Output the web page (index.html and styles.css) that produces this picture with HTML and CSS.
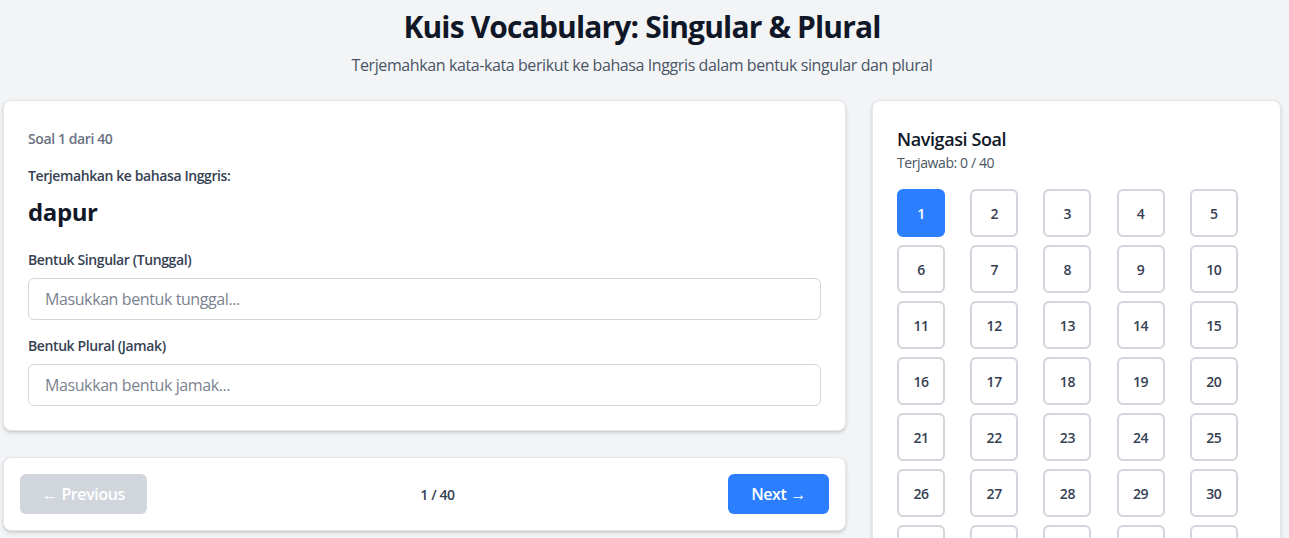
FILE: index.html
```html
<!DOCTYPE html>
<html lang="id">
<head>
<meta charset="utf-8">
<title>Kuis Vocabulary: Singular &amp; Plural</title>
<link rel="stylesheet" href="styles.css">
</head>
<body>
<div class="page">
  <header class="header">
    <h1 class="title">Kuis Vocabulary: Singular &amp; Plural</h1>
    <p class="subtitle">Terjemahkan kata-kata berikut ke bahasa Inggris dalam bentuk singular dan plural</p>
  </header>
  <main class="layout">
    <section class="main-col">
      <div class="card question-card">
        <div class="counter">Soal 1 dari 40</div>
        <div class="prompt">Terjemahkan ke bahasa Inggris:</div>
        <div class="word">dapur</div>
        <label class="field-label" for="singular">Bentuk Singular (Tunggal)</label>
        <input class="field" id="singular" type="text" placeholder="Masukkan bentuk tunggal...">
        <label class="field-label second" for="plural">Bentuk Plural (Jamak)</label>
        <input class="field" id="plural" type="text" placeholder="Masukkan bentuk jamak...">
      </div>
      <div class="card pager">
        <button class="btn btn-disabled" type="button">← Previous</button>
        <span class="pager-count">1 / 40</span>
        <button class="btn btn-primary" type="button">Next →</button>
      </div>
    </section>
    <aside class="card nav-card">
      <h2 class="nav-title">Navigasi Soal</h2>
      <div class="nav-sub">Terjawab: 0 / 40</div>
      <div class="nav-grid">
        <button class="num active" type="button">1</button>
        <button class="num" type="button">2</button>
        <button class="num" type="button">3</button>
        <button class="num" type="button">4</button>
        <button class="num" type="button">5</button>
        <button class="num" type="button">6</button>
        <button class="num" type="button">7</button>
        <button class="num" type="button">8</button>
        <button class="num" type="button">9</button>
        <button class="num" type="button">10</button>
        <button class="num" type="button">11</button>
        <button class="num" type="button">12</button>
        <button class="num" type="button">13</button>
        <button class="num" type="button">14</button>
        <button class="num" type="button">15</button>
        <button class="num" type="button">16</button>
        <button class="num" type="button">17</button>
        <button class="num" type="button">18</button>
        <button class="num" type="button">19</button>
        <button class="num" type="button">20</button>
        <button class="num" type="button">21</button>
        <button class="num" type="button">22</button>
        <button class="num" type="button">23</button>
        <button class="num" type="button">24</button>
        <button class="num" type="button">25</button>
        <button class="num" type="button">26</button>
        <button class="num" type="button">27</button>
        <button class="num" type="button">28</button>
        <button class="num" type="button">29</button>
        <button class="num" type="button">30</button>
        <button class="num" type="button">31</button>
        <button class="num" type="button">32</button>
        <button class="num" type="button">33</button>
        <button class="num" type="button">34</button>
        <button class="num" type="button">35</button>
        <button class="num" type="button">36</button>
        <button class="num" type="button">37</button>
        <button class="num" type="button">38</button>
        <button class="num" type="button">39</button>
        <button class="num" type="button">40</button>
      </div>
    </aside>
  </main>
</div>
</body>
</html>
```

FILE: styles.css
```css
* { box-sizing: border-box; }
html, body {
  margin: 0;
  padding: 0;
  background: #f3f4f6;
  font-family: "Open Sans", "Noto Sans", "Liberation Sans", sans-serif;
  letter-spacing: -0.025em;
  color: #101828;
}
.page {
  width: 1278px;
  margin-left: 3px;
  padding-top: 9px;
}
.header { text-align: center; margin-bottom: 23px; }
.title {
  margin: 0;
  font-size: 30px;
  line-height: 36px;
  font-weight: 700;
  letter-spacing: -0.028em;
  color: #101828;
}
.subtitle {
  margin: 8px 0 0;
  font-size: 16px;
  line-height: 24px;
  color: #4a5565;
}
.layout {
  display: grid;
  grid-template-columns: 1fr 409px;
  gap: 26px;
  align-items: start;
}
.main-col { display: flex; flex-direction: column; gap: 26px; }
.card {
  background: #fff;
  border: 1px solid #e5e7eb;
  border-radius: 8px;
  box-shadow: 0 2px 4px rgba(0,0,0,0.12), 0 1px 2px rgba(0,0,0,0.08);
}
.question-card {
  padding: 28px 24px 24px;
  display: flex;
  flex-direction: column;
}
.counter { font-size: 14px; line-height: 20px; font-weight: 600; color: #6a7282; margin-bottom: 17px; }
.prompt { font-size: 14px; line-height: 20px; font-weight: 600; color: #364153; margin-bottom: 10px; }
.word { font-size: 24px; line-height: 32px; font-weight: 700; color: #101828; margin-bottom: 22px; }
.field-label { font-size: 14px; line-height: 20px; font-weight: 600; color: #364153; margin-bottom: 8px; }
.field-label.second { margin-top: 16px; }
.field {
  height: 42px;
  width: 100%;
  border: 1px solid #d1d5dc;
  border-radius: 6px;
  padding: 0 16px;
  font-family: inherit;
  letter-spacing: inherit;
  font-size: 16px;
  color: #101828;
  background: #fff;
  outline: none;
}
.field::placeholder { color: #7b8290; }
.pager {
  padding: 16px;
  display: flex;
  align-items: center;
  justify-content: space-between;
}
.btn {
  height: 40px;
  border: 0;
  border-radius: 6px;
  padding: 0;
  font-family: inherit;
  letter-spacing: inherit;
  font-size: 16px;
  font-weight: 600;
  color: #fff;
  white-space: nowrap;
  text-align: center;
}
.btn-disabled { background: #d1d5dc; width: 127px; }
.btn-primary { background: #2b7fff; width: 101px; }
.pager-count { font-size: 14px; font-weight: 600; color: #364153; }
.nav-card { padding: 24px 25px 24px 24px; }
.nav-title { margin: 0; font-size: 18px; line-height: 28px; font-weight: 600; color: #101828; }
.nav-sub { font-size: 14px; line-height: 20px; color: #4a5565; margin-bottom: 16px; }
.nav-grid {
  display: grid;
  grid-template-columns: repeat(5, 1fr);
  gap: 8px;
}
.num {
  width: 48px;
  height: 48px;
  border: 2px solid #d1d5dc;
  border-radius: 6px;
  background: #fff;
  font-family: inherit;
  letter-spacing: inherit;
  font-size: 14px;
  font-weight: 600;
  color: #364153;
  padding: 0;
}
.num.active { background: #2b7fff; border-color: #2b7fff; color: #fff; }
```
